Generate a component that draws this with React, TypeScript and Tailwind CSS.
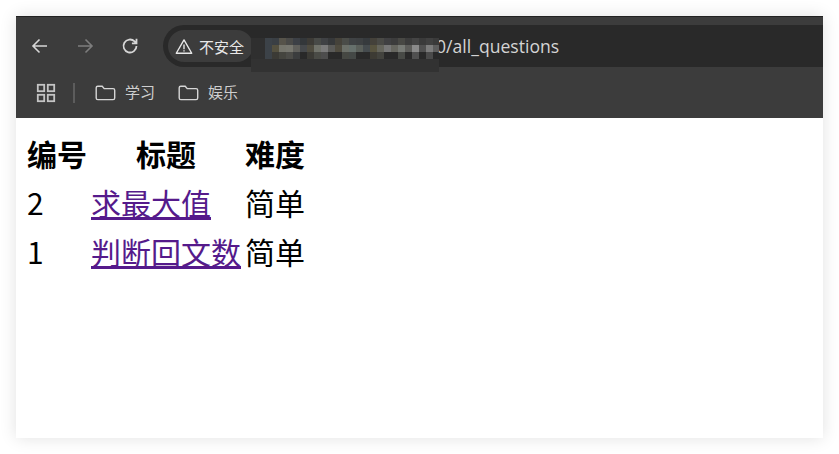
import React from "react";

const CJK = "font-['Noto_Sans_CJK_SC','Noto_Sans',sans-serif]";

const mosaic: [number, number, number, number, string][] = [
  [265, 38, 7, 21, "#3c4248"], [272, 38, 7, 7, "#3a3f44"], [279, 38, 7, 7, "#56534a"], [286, 38, 7, 7, "#4a4a48"],
  [293, 38, 7, 7, "#3c4046"], [272, 45, 7, 7, "#54503f"], [279, 45, 7, 7, "#75756c"], [286, 45, 7, 7, "#77776f"],
  [293, 45, 7, 7, "#60605c"], [300, 45, 7, 7, "#45484b"], [307, 45, 7, 7, "#4f4c40"], [314, 45, 7, 7, "#70726a"],
  [321, 45, 7, 7, "#7a7a7a"], [328, 45, 7, 7, "#5a5a58"], [335, 45, 7, 7, "#4f4b3f"], [342, 45, 7, 7, "#6b6f68"],
  [349, 45, 7, 7, "#66706c"], [356, 45, 7, 7, "#5a5f5a"], [363, 45, 7, 7, "#454b4e"], [370, 45, 7, 7, "#57533f"],
  [377, 45, 7, 7, "#65655c"], [384, 45, 7, 7, "#777777"], [391, 45, 7, 7, "#66665f"], [398, 45, 7, 7, "#777a75"],
  [405, 45, 7, 7, "#5d5d5a"], [412, 45, 7, 7, "#8a8a8a"], [419, 45, 7, 7, "#505050"], [426, 45, 7, 7, "#7c7c7c"],
  [433, 45, 6, 7, "#5e5e5e"], [300, 38, 7, 7, "#33373a"], [307, 38, 7, 7, "#3d3b36"], [314, 38, 7, 7, "#484a47"],
  [321, 38, 7, 7, "#3f4144"], [328, 38, 7, 7, "#36383a"], [335, 38, 7, 7, "#45423a"], [342, 38, 7, 7, "#4a4c48"],
  [349, 38, 7, 7, "#3f4244"], [356, 38, 7, 7, "#3d4042"], [363, 38, 7, 7, "#363a3d"], [370, 38, 7, 7, "#44413a"],
  [377, 38, 7, 7, "#4a4a46"], [384, 38, 7, 7, "#404042"], [391, 38, 7, 7, "#3c3c3c"], [398, 38, 7, 7, "#484844"],
  [405, 38, 7, 7, "#3c3c3c"], [412, 38, 7, 7, "#444444"], [419, 38, 7, 7, "#3a3a3a"], [426, 38, 7, 7, "#404040"],
  [433, 38, 6, 7, "#3a3a3a"], [272, 52, 7, 7, "#3b3a35"], [279, 52, 7, 7, "#45453f"], [286, 52, 7, 7, "#4c4c48"],
  [293, 52, 7, 7, "#3b3d3e"], [307, 52, 7, 7, "#3b3a35"], [314, 52, 7, 7, "#4a4b46"], [321, 52, 7, 7, "#4d4d4d"],
  [342, 52, 7, 7, "#464843"], [349, 52, 7, 7, "#444846"], [370, 52, 7, 7, "#3d3b34"], [377, 52, 7, 7, "#43433e"],
  [398, 52, 7, 7, "#484a46"], [412, 52, 7, 7, "#505050"], [426, 52, 7, 7, "#4a4a4a"],
];

function Folder() {
  return (
    <svg width="21" height="16" viewBox="0 0 21 16" fill="none" stroke="#d6d6d6" strokeWidth="1.4" className="shrink-0">
      <path d="M1.2 2.8c0-.9.7-1.6 1.6-1.6h4.4l2 2.4h8.9c.9 0 1.6.7 1.6 1.6v7.8c0 .9-.7 1.6-1.6 1.6H2.8c-.9 0-1.6-.7-1.6-1.6z" />
    </svg>
  );
}

export default function App() {
  return (
    <div className="h-[454px] w-[839px] overflow-hidden bg-white p-4">
      <div className="flex h-[422px] w-[807px] flex-col bg-white shadow-[0_0_16px_rgba(0,0,0,0.12)]">
        <div className={`relative h-[102px] border-t border-[#222] bg-[#3c3c3c] ${CJK}`}>
          <div className="flex h-[50px] items-center pt-[8px] pl-[14px]">
            <svg width="20" height="20" viewBox="0 0 20 20" fill="none" stroke="#d6d6d6" strokeWidth="1.6">
              <path d="M17 10H3.5M9.5 3.5 3 10l6.5 6.5" />
            </svg>
            <svg width="20" height="20" viewBox="0 0 20 20" fill="none" stroke="#7d7d7d" strokeWidth="1.6" className="ml-[25px]">
              <path d="M3 10h13.5M10.5 3.5 17 10l-6.5 6.5" />
            </svg>
            <svg width="20" height="20" viewBox="0 0 20 20" fill="none" stroke="#d6d6d6" strokeWidth="1.8" className="ml-[25px]">
              <path d="M16.5 10a6.5 6.5 0 1 1-1.9-4.6L16.5 7.3M16.5 2.8v4.6h-4.6" />
            </svg>
            <div className="ml-[23px] flex h-[42px] flex-1 items-center rounded-l-[21px] bg-[#292929] pl-[5px]">
              <div className="flex h-[32px] w-[85px] shrink-0 items-center gap-[6px] rounded-full bg-[#3c3c3c] pl-[7px]">
                <svg width="18" height="17" viewBox="0 0 17 16" fill="none" stroke="#e8e8e8" strokeWidth="1.3">
                  <path d="M8.5 1.8 15.8 14.4H1.2z" strokeLinejoin="round" />
                  <path d="M8.5 6v4.6M8.5 11.6v1.2" />
                </svg>
                <span className="text-[15px] leading-none text-[#e8e8e8]">不安全</span>
              </div>
              <span className="ml-[183px] font-['Open_Sans','Noto_Sans',sans-serif] text-[17.6px] text-[#d4d4d4]">0/all_questions</span>
            </div>
          </div>
          <div className="flex h-[51px] items-center pl-[20px]">
            <svg width="20" height="20" viewBox="0 0 20 20" fill="none" stroke="#c4c4c4" strokeWidth="1.8">
              <rect x="1.8" y="1.8" width="6.4" height="6.4" />
              <rect x="11.8" y="1.8" width="6.4" height="6.4" />
              <rect x="1.8" y="11.8" width="6.4" height="6.4" />
              <rect x="11.8" y="11.8" width="6.4" height="6.4" />
            </svg>
            <div className="ml-[17px] h-[20px] w-[2px] bg-[#5c5c5c]" />
            <div className="ml-[20px] flex items-center gap-[9px]">
              <Folder />
              <span className="text-[15px] text-[#cfcfcf]">学习</span>
            </div>
            <div className="ml-[23px] flex items-center gap-[9px]">
              <Folder />
              <span className="text-[15px] text-[#cfcfcf]">娱乐</span>
            </div>
          </div>
          <svg width="190" height="36" viewBox="250 37 190 36" className="absolute top-[20px] left-[234px]">
            <rect x="251" y="38" width="14" height="21" fill="#2f2f2f" />
            <rect x="251" y="59" width="188" height="13" fill="#323232" />
            {mosaic.map(([x, y, w, h, c], i) => (
              <rect key={i} x={x} y={y} width={w} height={h} fill={c} />
            ))}
          </svg>
        </div>
        <table className={`mt-[10px] ml-[8px] w-fit border-separate border-spacing-[2px] text-[30px] leading-[45px] text-black ${CJK}`}>
          <thead>
            <tr>
              <th className="p-px font-bold">编号</th>
              <th className="p-px font-bold">标题</th>
              <th className="p-px font-bold">难度</th>
            </tr>
          </thead>
          <tbody>
            <tr>
              <td className="p-px">2</td>
              <td className="p-px"><a href="#" className="text-[#551a8b] underline">求最大值</a></td>
              <td className="p-px">简单</td>
            </tr>
            <tr>
              <td className="p-px">1</td>
              <td className="p-px"><a href="#" className="text-[#551a8b] underline">判断回文数</a></td>
              <td className="p-px">简单</td>
            </tr>
          </tbody>
        </table>
      </div>
    </div>
  );
}
